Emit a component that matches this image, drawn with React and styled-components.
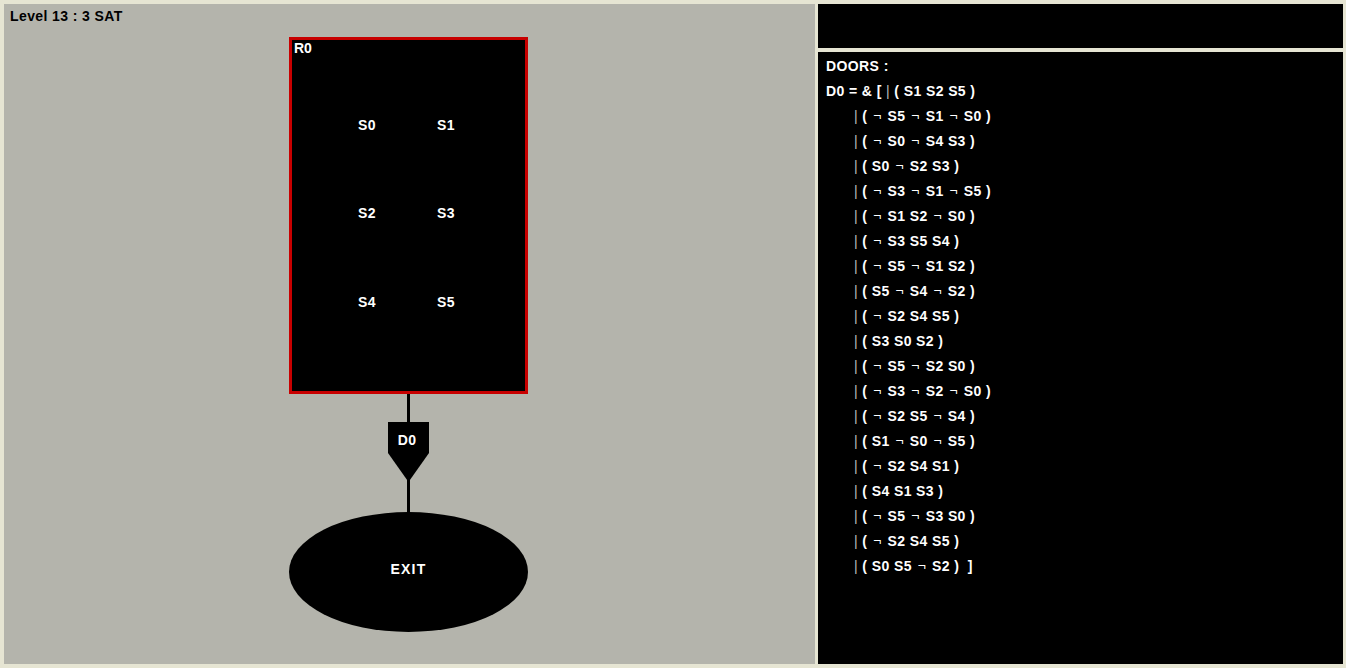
import React from "react";
import styled, { createGlobalStyle } from "styled-components";

const GlobalStyle = createGlobalStyle`
  html, body {
    margin: 0;
    padding: 0;
    background: #e6e5d3;
  }
  body {
    font-family: "Liberation Sans", Arial, sans-serif;
    font-weight: bold;
    font-size: 14px;
  }
`;

const Screen = styled.div`
  width: 1346px;
  height: 668px;
  box-sizing: border-box;
  padding: 4px 3px 4px 4px;
  display: grid;
  grid-template-columns: 811px 525px;
  column-gap: 3px;
  background: #e6e5d3;
`;

const Board = styled.div`
  position: relative;
  background: #b4b4ac;
  overflow: hidden;
`;

const LevelTitle = styled.div`
  position: absolute;
  left: 6px;
  top: 4px;
  color: #000;
  letter-spacing: 0.4px;
`;

const Side = styled.div`
  display: grid;
  grid-template-rows: 44px 1fr;
  row-gap: 4px;
`;

const InfoBar = styled.div`
  background: #000;
`;

const DoorsPanel = styled.div`
  background: #000;
  color: #fff;
  padding: 2px 0 0 8px;
  display: flex;
  flex-direction: column;
`;

const Line = styled.div`
  line-height: 25px;
  white-space: pre;
  letter-spacing: 0.4px;
  padding-left: ${({ indent }) => (indent ? "28px" : "0")};
`;

const Symbol = styled.span`
  font-weight: normal;
  color: ${({ dim }) => (dim ? "#bdbdbd" : "#fff")};
  margin: 0 ${({ dim }) => (dim ? "0" : "1.5px")};
`;

const Room = styled.div`
  position: absolute;
  left: 285px;
  top: 33px;
  width: 239px;
  height: 357px;
  box-sizing: border-box;
  border: 3px solid #c80000;
  background: #000;
  color: #fff;
`;

const RoomName = styled.div`
  position: absolute;
  left: 2px;
  top: 0px;
`;

const Switch = styled.div`
  position: absolute;
  left: ${({ x }) => x}px;
  top: ${({ y }) => y}px;
  transform: translate(-50%, -50%);
  letter-spacing: 0.4px;
`;

const Connector = styled.svg`
  position: absolute;
  left: 379px;
  top: 390px;
`;

const DoorLabel = styled.div`
  position: absolute;
  left: 403px;
  top: 436px;
  transform: translate(-50%, -50%);
  color: #fff;
  letter-spacing: 0.4px;
`;

const Exit = styled.div`
  position: absolute;
  left: 285px;
  top: 508px;
  width: 239px;
  height: 120px;
  border-radius: 50%;
  background: #000;
  color: #fff;
  display: flex;
  align-items: center;
  justify-content: center;
  letter-spacing: 1.2px;
  padding-bottom: 6px;
  box-sizing: border-box;
`;

const switches = [
  { name: "S0", x: 75, y: 85 },
  { name: "S1", x: 154, y: 85 },
  { name: "S2", x: 75, y: 173 },
  { name: "S3", x: 154, y: 173 },
  { name: "S4", x: 75, y: 262 },
  { name: "S5", x: 154, y: 262 },
];

const clauses = [
  "| ( ¬ S5 ¬ S1 ¬ S0 )",
  "| ( ¬ S0 ¬ S4 S3 )",
  "| ( S0 ¬ S2 S3 )",
  "| ( ¬ S3 ¬ S1 ¬ S5 )",
  "| ( ¬ S1 S2 ¬ S0 )",
  "| ( ¬ S3 S5 S4 )",
  "| ( ¬ S5 ¬ S1 S2 )",
  "| ( S5 ¬ S4 ¬ S2 )",
  "| ( ¬ S2 S4 S5 )",
  "| ( S3 S0 S2 )",
  "| ( ¬ S5 ¬ S2 S0 )",
  "| ( ¬ S3 ¬ S2 ¬ S0 )",
  "| ( ¬ S2 S5 ¬ S4 )",
  "| ( S1 ¬ S0 ¬ S5 )",
  "| ( ¬ S2 S4 S1 )",
  "| ( S4 S1 S3 )",
  "| ( ¬ S5 ¬ S3 S0 )",
  "| ( ¬ S2 S4 S5 )",
  "| ( S0 S5 ¬ S2 )  ]",
];

// the game draws "|" and "¬" lighter than the rest of the formula
const Formula = ({ text }) =>
  text.split(/([|¬])/).map((part, i) =>
    part === "|" || part === "¬" ? (
      <Symbol key={i} dim={part === "|"}>
        {part}
      </Symbol>
    ) : (
      part
    )
  );

export default function App() {
  return (
    <>
      <GlobalStyle />
      <Screen>
        <Board>
          <LevelTitle>Level 13 : 3 SAT</LevelTitle>
          <Room>
            <RoomName>R0</RoomName>
            {switches.map((s) => (
              <Switch key={s.name} x={s.x} y={s.y}>
                {s.name}
              </Switch>
            ))}
          </Room>
          <Connector width="50" height="122" viewBox="0 0 50 122">
            <rect x="24" y="0" width="3" height="28" fill="#000" />
            <polygon points="5,28 46,28 46,59 25.5,88 5,59" fill="#000" />
            <rect x="24" y="84" width="3" height="38" fill="#000" />
          </Connector>
          <DoorLabel>D0</DoorLabel>
          <Exit>EXIT</Exit>
        </Board>
        <Side>
          <InfoBar />
          <DoorsPanel>
            <Line>DOORS :</Line>
            <Line>
              <Formula text="D0 = & [ | ( S1 S2 S5 )" />
            </Line>
            {clauses.map((c, i) => (
              <Line key={i} indent>
                <Formula text={c} />
              </Line>
            ))}
          </DoorsPanel>
        </Side>
      </Screen>
    </>
  );
}
